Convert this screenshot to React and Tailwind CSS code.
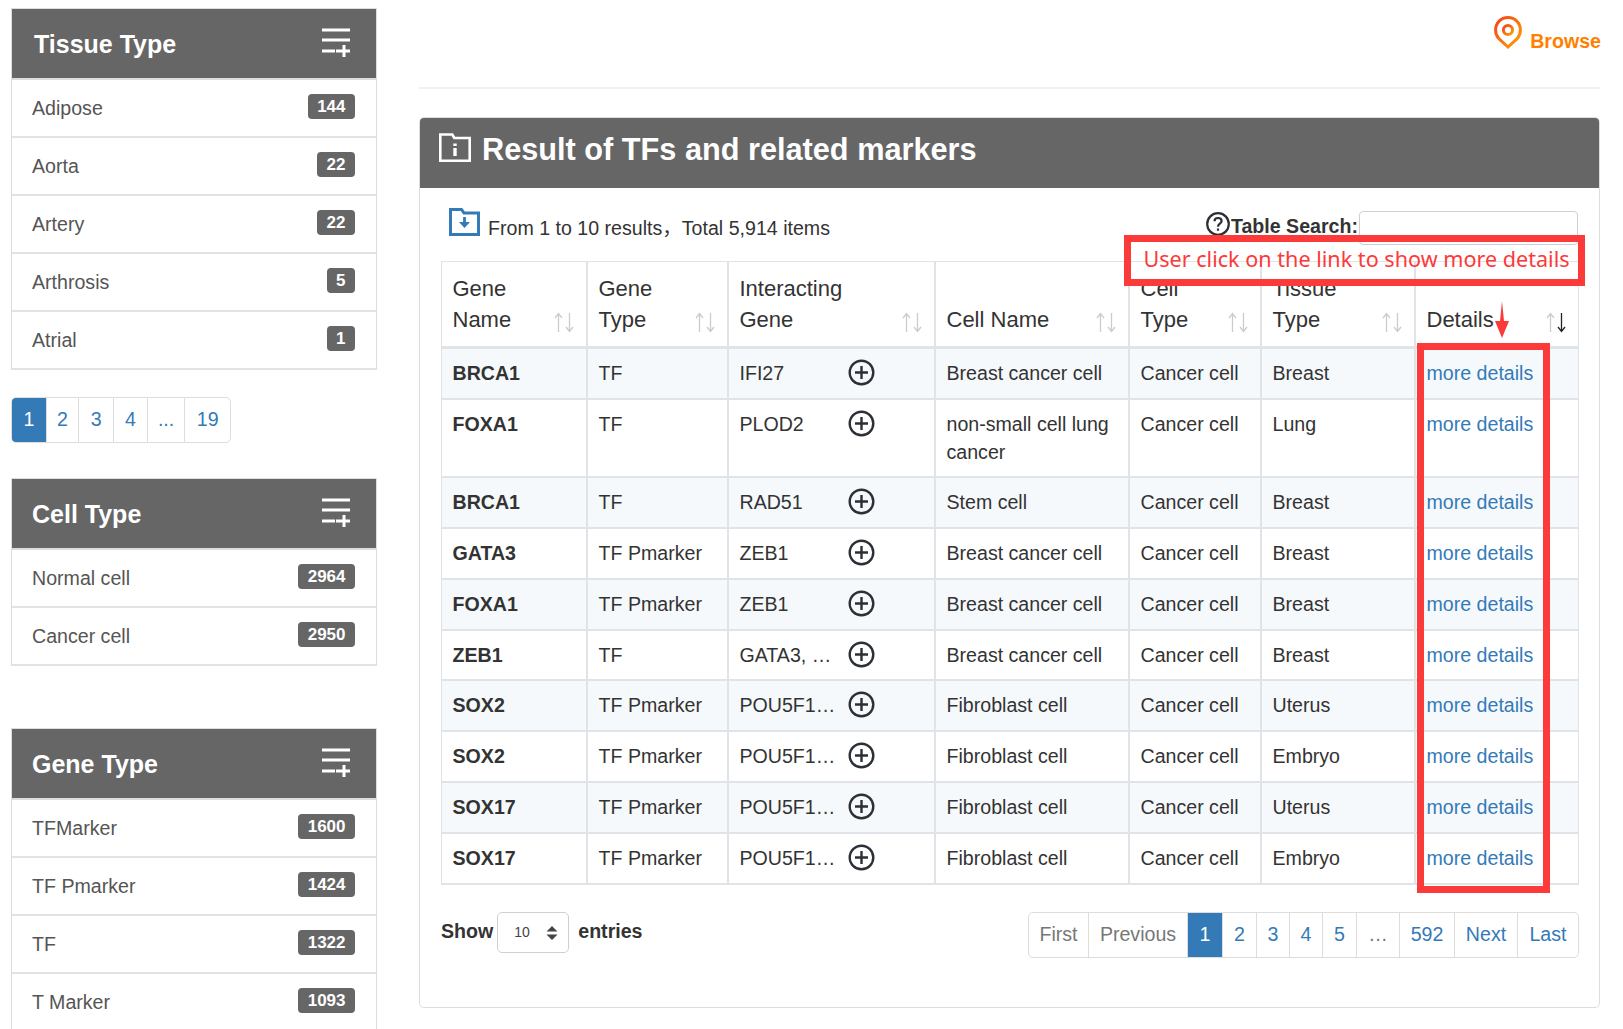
function ListPlus() {
  return (
    <svg width="30" height="30" viewBox="0 0 30 30" fill="none" stroke="#fff" strokeWidth="3" className="-mt-[2px]">
      <path d="M1 2h28M1 12h28M1 23h13M15 23h14M23 17v12" />
    </svg>
  );
}
function Card({ title, items, shift }) {
  return (
    <div className="border border-[#ddd] border-b-0">
      <div className="h-[71px] bg-[#666] border-b-[2px] border-[#ddd] flex items-center justify-between pl-[20px] pr-[25px] box-border">
        <span className={"text-[25px] font-bold text-white mt-[3px] " + (shift ? "ml-[2px]" : "")}>{title}</span>
        <ListPlus />
      </div>
      {items.map(([n, c]) => (
        <div key={n} className="h-[58px] box-border border-b-[2px] border-[#e2e2e2] flex items-center justify-between pl-[20px] pr-[21px]">
          <span className="text-[19.6px] text-[#555] mt-[2px]">{n}</span>
          <span className="bg-[#666] text-white font-bold text-[17px] leading-[25px] h-[25px] px-[9.5px] rounded-[4px] -mt-[4px]">{c}</span>
        </div>
      ))}
    </div>
  );
}
function Sort({ active }) {
  return (
    <svg width="20" height="21" viewBox="0 0 20 21" fill="none" strokeWidth="1.3" className="shrink-0">
      <path d="M4.5 20V1.5M1 6l3.5-4.5L8 6" stroke="#c9ccd1" />
      <path d="M15.5 1v18.5M12 15l3.5 4.5L19 15" stroke={active ? "#222" : "#c9ccd1"} />
    </svg>
  );
}
function Plus() {
  return (
    <svg width="27" height="27" viewBox="0 0 27 27" fill="none" stroke="#2b2f36" strokeWidth="2.4" className="shrink-0">
      <circle cx="13.5" cy="13.5" r="11.8" />
      <path d="M13.5 7v13M7 13.5h13" />
    </svg>
  );
}
const rows = [
  ["BRCA1", "TF", "IFI27", "Breast cancer cell", "Breast"],
  ["FOXA1", "TF", "PLOD2", "non-small cell lung cancer", "Lung"],
  ["BRCA1", "TF", "RAD51", "Stem cell", "Breast"],
  ["GATA3", "TF Pmarker", "ZEB1", "Breast cancer cell", "Breast"],
  ["FOXA1", "TF Pmarker", "ZEB1", "Breast cancer cell", "Breast"],
  ["ZEB1", "TF", "GATA3, …", "Breast cancer cell", "Breast"],
  ["SOX2", "TF Pmarker", "POU5F1…", "Fibroblast cell", "Uterus"],
  ["SOX2", "TF Pmarker", "POU5F1…", "Fibroblast cell", "Embryo"],
  ["SOX17", "TF Pmarker", "POU5F1…", "Fibroblast cell", "Uterus"],
  ["SOX17", "TF Pmarker", "POU5F1…", "Fibroblast cell", "Embryo"],
];
const heads = [
  [["Gene", "Name"], 146],
  [["Gene", "Type"], 141],
  [["Interacting", "Gene"], 207],
  [["Cell Name"], 194],
  [["Cell", "Type"], 132],
  [["Tissue", "Type"], 154],
  [["Details"], 163],
];
const td = "border-r-[2px] border-b-[2px] border-[#e0e3e8] px-[10.5px] py-0 align-top pt-[10px] text-[#333] font-normal";
function Pager({ cells, className }) {
  return (
    <div className={"flex border border-[#ddd] rounded-[5px] overflow-hidden text-[19.6px] " + className}>
      {cells.map(([t, w, kind], i) => (
        <div
          key={i}
          style={{ width: w }}
          className={
            "flex items-center justify-center border-r border-[#ddd] last:border-r-0 " +
            (kind === "on" ? "bg-[#337ab7] text-white" : kind === "off" ? "text-[#777]" : "text-[#337ab7]")
          }
        >
          {t}
        </div>
      ))}
    </div>
  );
}
export default function App() {
  return (
    <div className="relative w-[1623px] h-[1029px] overflow-hidden bg-white flex font-['Liberation_Sans','Noto_Sans_CJK_SC',sans-serif] text-[#333]">
      <aside className="w-[366px] ml-[11px] pt-[8px] shrink-0">
        <Card shift title="Tissue Type" items={[["Adipose", 144], ["Aorta", 22], ["Artery", 22], ["Arthrosis", 5], ["Atrial", 1]]} />
        <Pager
          className="mt-[27px] h-[46px] w-[220px]"
          cells={[["1", 35, "on"], ["2", 33], ["3", 35], ["4", 34], ["...", 38], ["19", 45]]}
        />
        <div className="mt-[35px]">
          <Card title="Cell Type" items={[["Normal cell", 2964], ["Cancer cell", 2950]]} />
        </div>
        <div className="mt-[62px]">
          <Card title="Gene Type" items={[["TFMarker", 1600], ["TF Pmarker", 1424], ["TF", 1322], ["T Marker", 1093]]} />
        </div>
      </aside>

      <main className="ml-[42px] w-[1181px] shrink-0">
        <div className="h-[89px] border-b-[2px] border-[#f0f0f0] flex justify-end items-start box-border">
          <svg width="28" height="33" viewBox="0 0 28 33" fill="none" strokeWidth="3" className="mt-[16px] mr-[8px]">
            <defs>
              <linearGradient id="pin" x1="0" y1="0" x2="1" y2="1">
                <stop offset="0" stopColor="#f5431a" />
                <stop offset="1" stopColor="#ffa000" />
              </linearGradient>
            </defs>
            <path d="M14 31 4.8 22.6C2.6 20.2 1.6 17.2 1.6 14 1.6 7 7 1.6 14 1.6S26.4 7 26.4 14c0 3.2-1 6.2-3.2 8.6Z" stroke="url(#pin)" />
            <circle cx="14" cy="14" r="4.6" stroke="url(#pin)" />
          </svg>
          <span className="text-[19.6px] font-bold text-[#ff7f00] mt-[27px] -mr-[1px]">Browse</span>
        </div>

        <section className="mt-[28px] h-[891px] border border-[#ddd] rounded-[5px] overflow-hidden box-border relative">
          <div className="h-[70px] bg-[#666] flex items-center pl-[19px]">
            <svg width="32" height="29" viewBox="0 0 32 29" fill="none" stroke="#fff" strokeWidth="2.6" className="-mt-[12px]">
              <path d="M1.3 27.7V1.5h12l2 3.5h15.4v22.7Z" />
              <path d="M16 10.5v2.6M16 15v8" strokeWidth="3.4" />
            </svg>
            <h1 className="text-[30.7px] font-bold text-white ml-[11px] -mt-[5px]">Result of TFs and related markers</h1>
          </div>

          <div className="h-[73px] relative">
            <div className="flex items-start pl-[29px] pt-[20px]">
              <svg width="31" height="28" viewBox="0 0 31 28" fill="none" stroke="#337ab7" strokeWidth="3">
                <path d="M1.5 26.5V1.5h11l2.4 3.4h14.6v21.6Z" />
                <path d="M15.5 9v7" strokeWidth="2.8" />
                <path d="M10 14h11l-5.5 6Z" fill="#337ab7" stroke="none" />
              </svg>
              <span className="text-[19.6px] ml-[8px] mt-[6px]">From 1 to 10 results，Total 5,914 items</span>
            </div>
            <div className="absolute right-[21px] top-[24px] flex items-start">
              <svg width="24" height="24" viewBox="0 0 24 24" fill="none" stroke="#2b2f36" strokeWidth="2.2">
                <circle cx="12" cy="12" r="10.8" />
                <path d="M8.5 9.3c0-2 1.5-3.3 3.5-3.3s3.6 1.3 3.6 3.1c0 2.6-3.6 2.6-3.6 5.6" />
                <path d="M12 16.5v2.3" />
              </svg>
              <b className="text-[19.6px] leading-[27px] ml-[1px] mt-[1px]">Table Search:</b>
              <div className="w-[219px] h-[34px] border border-[#ccd0d6] rounded-[4px] ml-[1px] -mt-[1px] box-border" />
            </div>
          </div>

          <div className="pl-[21px] pr-[20px]">
            <table className="w-[1137px] table-fixed border-separate border-spacing-0 border-l border-t border-[#e0e3e8] text-[19.6px] leading-[28px]">
              <colgroup>
                {heads.map(([, w], i) => (
                  <col key={i} style={{ width: w }} />
                ))}
              </colgroup>
              <thead>
                <tr>
                  {heads.map(([lines], i) => (
                    <th
                      key={i}
                      className="h-[87px] border-r-[2px] border-b-[3px] border-[#e0e3e8] last:border-r px-[10.5px] pb-[11px] align-bottom text-left font-normal text-[22px] leading-[31px] text-[#333]"
                    >
                      <div className="flex items-end justify-between pr-[1.5px]">
                        <span>
                          {lines.map((l) => (
                            <span key={l} className="block">{l}</span>
                          ))}
                        </span>
                        <span className="mb-[2px]">
                          <Sort active={i === 6} />
                        </span>
                      </div>
                    </th>
                  ))}
                </tr>
              </thead>
              <tbody>
                {rows.map((r, i) => (
                  <tr key={i} className={i % 2 === 0 ? "bg-[#f6f9fc]" : "bg-white"}>
                    <td className={td + (i === 1 ? " h-[78px]" : " h-[50.9px]")}><b>{r[0]}</b></td>
                    <td className={td}>{r[1]}</td>
                    <td className={td}>
                      <div className="flex items-start">
                        <span className="w-[108px] shrink-0 whitespace-nowrap">{r[2]}</span>
                        <Plus />
                      </div>
                    </td>
                    <td className={td}>{r[3]}</td>
                    <td className={td}>Cancer cell</td>
                    <td className={td}>{r[4]}</td>
                    <td className={td + " !border-r"}>
                      <a className="text-[#337ab7]">more details</a>
                    </td>
                  </tr>
                ))}
              </tbody>
            </table>

            <div className="flex justify-between items-start mt-[27px]">
              <div className="flex items-start text-[19.6px] font-bold">
                <span className="mt-[5px]">Show</span>
                <div className="ml-[4px] w-[72px] h-[41px] border border-[#ccd0d6] rounded-[5px] flex items-center box-border pl-[16px] pr-[10px] justify-between text-[14px] font-normal text-[#444]">
                  <span>10</span>
                  <svg width="12" height="16" viewBox="0 0 12 16" fill="#444">
                    <path d="M6 1 11.5 6.5H.5ZM6 15 .5 9.5h11Z" />
                  </svg>
                </div>
                <span className="ml-[9px] mt-[5px]">entries</span>
              </div>
              <Pager
                className="h-[46px] w-[551px]"
                cells={[
                  ["First", 60, "off"], ["Previous", 99, "off"], ["1", 35, "on"], ["2", 34], ["3", 33], ["4", 33], ["5", 34],
                  ["…", 43, "off"], ["592", 55], ["Next", 63], ["Last", 60],
                ]}
              />
            </div>
          </div>
        </section>
      </main>

      <div className="absolute left-[1124px] top-[235px] w-[461px] h-[51px] border-[7px] border-[#fd3a3a] box-border flex items-center justify-center">
        <span className="font-['Noto_Sans',sans-serif] text-[21.6px] leading-none text-[#fd3a3a] whitespace-nowrap ml-[4px] -mt-[3px]">User click on the link to show more details</span>
      </div>
      <div className="absolute left-[1417px] top-[343px] w-[133px] h-[550px] border-[7px] border-[#fd3a3a] box-border" />
      <svg className="absolute left-[1495px] top-[301px]" width="14" height="37" viewBox="0 0 14 37" fill="#fd3a3a">
        <path d="M7 0 9 20 14 20 7 37 0 20 5 20Z" />
      </svg>
    </div>
  );
}
